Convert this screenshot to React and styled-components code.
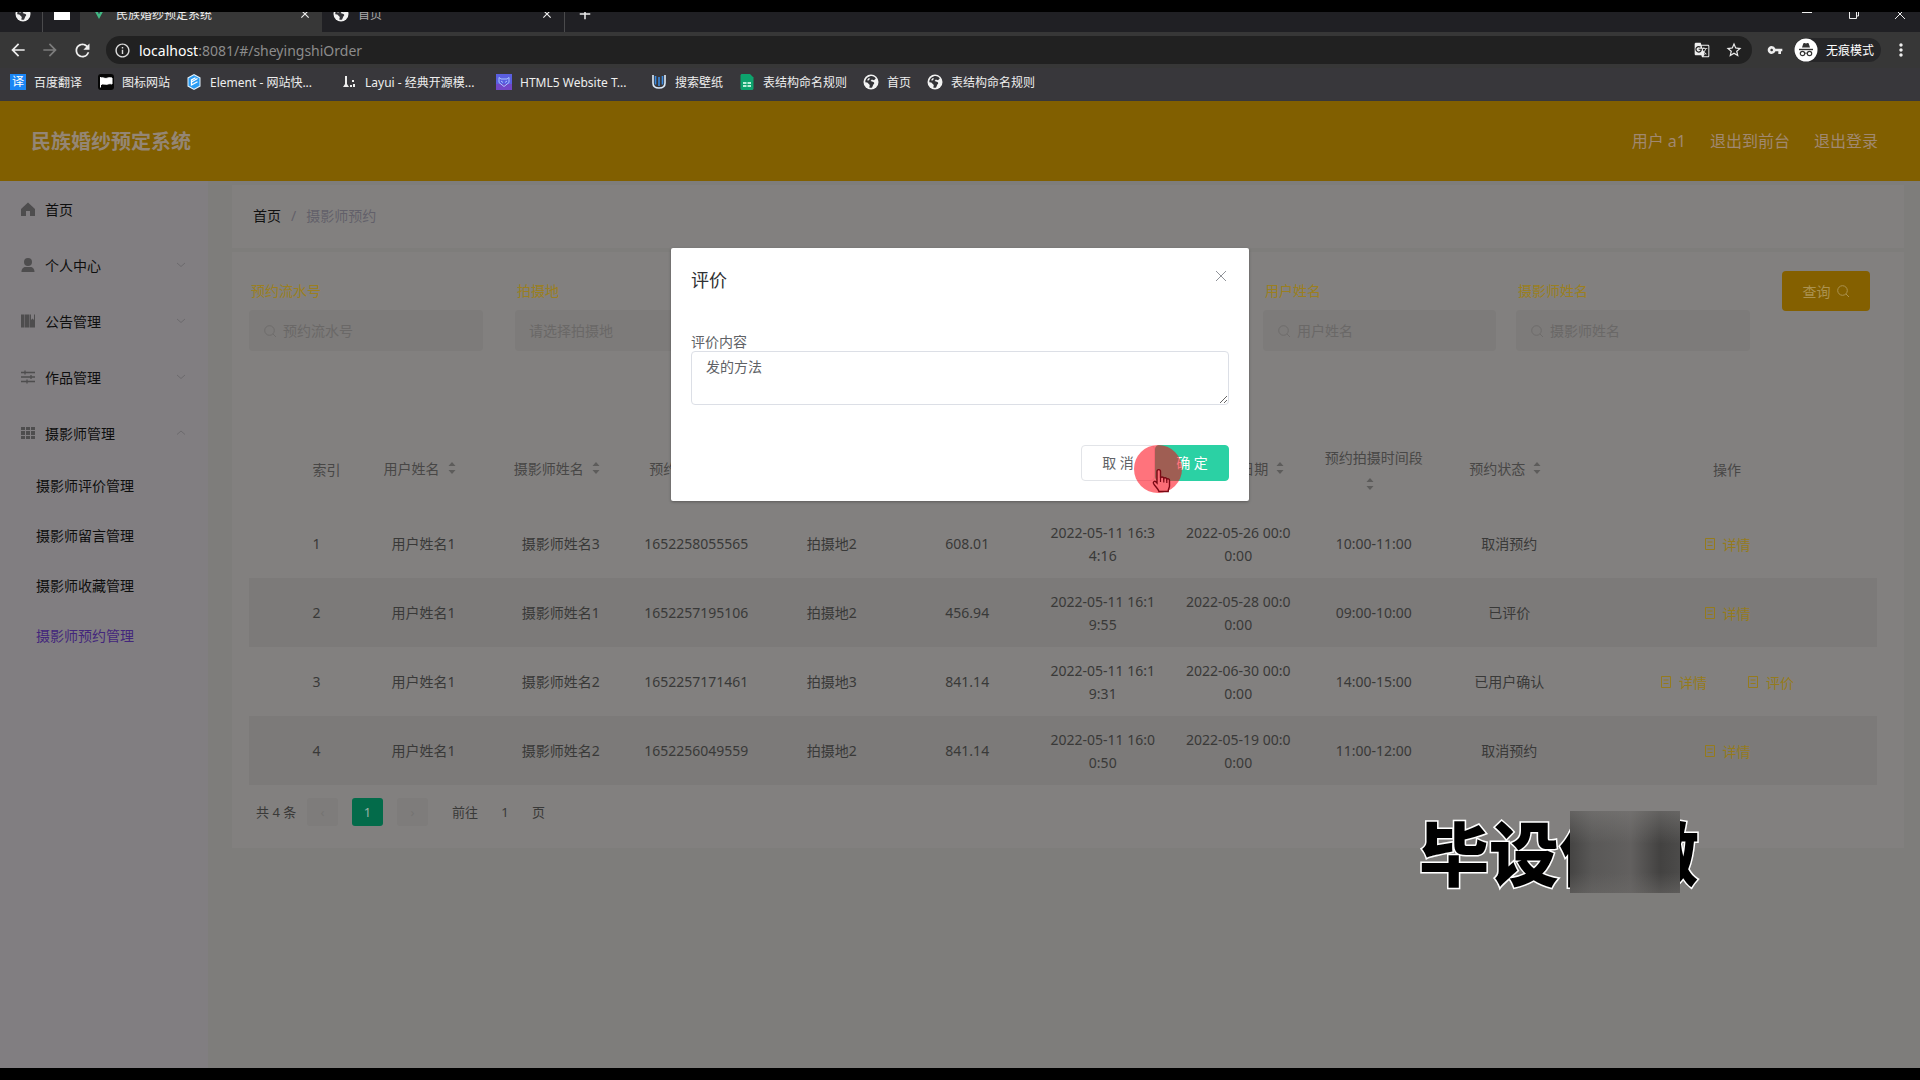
import React from 'react'
import styled, { createGlobalStyle } from 'styled-components'
import {
  MdArrowBack,
  MdArrowForward,
  MdRefresh,
  MdInfoOutline,
  MdGTranslate,
  MdStarBorder,
  MdVpnKey,
  MdMoreVert,
  MdClose,
  MdAdd
} from 'react-icons/md'

const GlobalStyle = createGlobalStyle`
  * {
    box-sizing: border-box;
  }

  body {
    margin: 0;
    background: #000;
    font-family: "Noto Sans", "Noto Sans CJK SC", sans-serif;
    font-size: 14px;
    line-height: 23px;
  }

  button, input, textarea {
    font-family: inherit;
  }

  ul, ol, h1, h2 {
    margin: 0;
    padding: 0;
    list-style: none;
  }

  a {
    color: inherit;
    text-decoration: none;
  }

  svg {
    display: block;
    flex: none;
  }
`

const Screen = styled.div`
  display: flex;
  flex-direction: column;
  min-height: 100vh;
  padding: 12px 0;
  overflow: hidden;
`

/* browser */

const TabStrip = styled.div`
  display: flex;
  align-items: flex-end;
  height: 20px;
  overflow: hidden;
  background: #202024;
  color: #fff;
`

const PinnedTab = styled.div`
  display: flex;
  align-items: center;
  justify-content: center;
  width: ${props => props.$width}px;
  height: 36px;
  padding-left: ${props => props.$divided ? '4px' : 0};
  border-right: ${props => props.$divided ? '1px solid #4a4a4c' : 'none'};
`

const Tab = styled.div`
  display: flex;
  align-items: center;
  gap: 9px;
  width: 242px;
  height: 36px;
  padding: 0 9px 0 11px;
  background: ${props => props.$active ? '#373737' : 'transparent'};
  color: ${props => props.$active ? '#eee' : '#aaa'};
  font-size: 12px;
`

const TabTitle = styled.span`
  flex: 1;
`

const PlainButton = styled.button`
  display: flex;
  align-items: center;
  justify-content: center;
  width: ${props => props.$width || 16}px;
  height: 36px;
  padding: 0;
  border: 0;
  background: none;
  color: ${props => props.$dim ? '#7c7c7c' : '#eee'};
`

const NewTab = styled(PlainButton)`
  margin-right: auto;
  border-left: 1px solid #4a4a4c;
`

const Toolbar = styled.div`
  display: flex;
  align-items: center;
  height: 36px;
  padding-left: 2px;
  background: #373737;
`

const AddressBar = styled.div`
  display: flex;
  flex: 1;
  align-items: center;
  height: 28px;
  margin: 0 4px 0 8px;
  padding: 0 2px 0 8px;
  border-radius: 14px;
  background: #212121;
  color: #ddd;
`

const Address = styled.span`
  flex: 1;
  margin-left: 8px;
  color: #8c8c8c;
`

const Host = styled.span`
  color: #fff;
`

const Incognito = styled.div`
  display: flex;
  align-items: center;
  gap: 8px;
  height: 24px;
  padding-right: 7px;
  border-radius: 12px;
  background: #262628;
  color: #fff;
  font-size: 12px;
`

const Bookmarks = styled.nav`
  display: flex;
  align-items: center;
  gap: 16px;
  height: 33px;
  padding: 0 10px 5px;
  background: #38373b;
  color: #eee;
  font-size: 12px;
`

const Bookmark = styled.a`
  display: flex;
  align-items: center;
  gap: 8px;
  white-space: nowrap;
`

const BookmarkText = styled.span`
  width: ${props => props.$clipped ? '115px' : 'auto'};
`

const TranslateMark = styled.span`
  width: 16px;
  height: 16px;
  background: #1b86f5;
  color: #fff;
  font-size: 12px;
  line-height: 16px;
  text-align: center;
`

/* application */

const Page = styled.div`
  position: relative;
  display: flex;
  flex: 1;
  flex-direction: column;
  background: #7e7d7b;
  color: #393938;
`

const Header = styled.header`
  display: flex;
  align-items: center;
  gap: 24px;
  height: 80px;
  padding: 0 42px 0 31px;
  background: #815f00;
  color: #a08870;
  font-size: 16px;
`

const Brand = styled.h1`
  flex: 1;
  color: #948675;
  font-size: 20px;
  font-weight: 700;
`

const Body = styled.div`
  display: flex;
  flex: 1;
`

const Sidebar = styled.nav`
  width: 208px;
  background: #817e81;
  color: #0e0e0e;
`

const MenuLink = styled.a`
  display: flex;
  align-items: center;
  height: 56px;
  padding: 0 22px 0 20px;
`

const MenuText = styled.span`
  flex: 1;
  margin-left: 9px;
`

const SubLink = styled.a`
  display: flex;
  align-items: center;
  height: 50px;
  padding: 0 0 2px 36px;
  color: ${props => props.$active ? '#43267c' : '#0e0e0e'};
`

const Main = styled.main`
  display: flex;
  flex: 1;
  flex-direction: column;
  padding: 4px 16px 0 24px;
`

const Breadcrumb = styled.div`
  display: flex;
  align-items: center;
  gap: 10px;
  height: 63px;
  padding: 0 0 2px 21px;
  background: #82807f;
  color: #62606a;
`

const Home = styled.a`
  color: #111;
`

const Panel = styled.section`
  margin-top: 4px;
  padding: 19px 27px 22px 17px;
  background: #82807f;
`

const SearchForm = styled.form`
  display: flex;
  align-items: flex-start;
  height: 159px;
`

const Field = styled.div`
  width: ${props => props.$width}px;
  margin-right: 20px;
  padding-top: 8px;
`

const FieldLabel = styled.label`
  display: block;
  height: 31px;
  padding-left: 2px;
  color: #9b7f20;
`

const InputBox = styled.div`
  display: flex;
  align-items: center;
  gap: 6px;
  width: 234px;
  max-width: 100%;
  height: 41px;
  padding: 0 14px;
  border-radius: 4px;
  background: #7d7b7a;
  color: #6e6c6b;
`

const TextInput = styled.input`
  flex: 1;
  min-width: 0;
  padding: 0;
  border: 0;
  background: none;
  font-size: 14px;

  &::placeholder {
    color: #6a6867;
  }
`

const SearchButton = styled.button`
  display: flex;
  align-items: center;
  justify-content: center;
  gap: 5px;
  width: 88px;
  height: 40px;
  margin: 0 7px 0 auto;
  padding: 0;
  border: 0;
  border-radius: 4px;
  background: #846000;
  color: #ab9250;
  font-size: 14px;
`

const Table = styled.table`
  width: 100%;
  table-layout: fixed;
  border-collapse: collapse;
  text-align: center;
`

const Col = styled.col`
  width: ${props => props.$width ? `${props.$width}px` : 'auto'};
`

const HeadCell = styled.th`
  height: 79px;
  padding: ${props => props.$shift ? '0 0 0 20px' : 0};
  color: #484746;
  font-weight: 400;
`

const SortCell = styled(HeadCell)`
  padding: 0 12px 3px;
`

const HeadLabel = styled.span`
  display: inline-flex;
  flex-wrap: wrap;
  align-items: center;
  justify-content: center;
  gap: 8px;
`

const SortArrows = styled.svg`
  margin-right: 8px;
`

const Row = styled.tr`
  height: 69px;
  background: ${props => props.$striped ? '#7c7a79' : 'transparent'};
`

const Cell = styled.td`
  padding: 0 12px;
  word-break: break-all;
`

const Actions = styled.div`
  display: flex;
  justify-content: center;
  gap: 40px;
`

const ActionButton = styled.button`
  display: flex;
  align-items: center;
  gap: 7px;
  padding: 0;
  border: 0;
  background: none;
  color: #957b1c;
  font-size: 14px;
`

const Pagination = styled.div`
  display: flex;
  align-items: center;
  height: 28px;
  margin-top: 13px;
  padding-left: 7px;
  font-size: 13px;
`

const PageButton = styled.button`
  width: 31px;
  height: 28px;
  margin-right: 14px;
  padding: 0;
  border: 0;
  border-radius: 3px;
  background: ${props => props.$active ? '#036b4a' : '#7e7c7b'};
  color: ${props => props.$active ? '#9bb3a8' : '#757372'};
  font-size: 13px;
`

const Total = styled.span`
  width: 51px;
`

const Jump = styled.label`
  display: flex;
  align-items: center;
  padding-left: 10px;
`

const JumpInput = styled.input`
  width: 54px;
  padding: 0;
  border: 0;
  background: none;
  color: inherit;
  font-size: 13px;
  text-align: center;
`

/* dialog */

const DialogLayer = styled.div`
  position: absolute;
  inset: 0;
  display: flex;
  align-items: flex-start;
  justify-content: center;
  padding-top: 147px;
`

const Dialog = styled.div`
  position: relative;
  width: 578px;
  padding: 20px;
  border-radius: 2px;
  background: #fff;
  box-shadow: 0 1px 3px rgba(0, 0, 0, 0.3);
  color: #606266;
`

const DialogHead = styled.div`
  display: flex;
  justify-content: space-between;
  height: 62px;
`

const DialogTitle = styled.h2`
  color: #303133;
  font-size: 18px;
  font-weight: 400;
  line-height: 24px;
`

const CloseButton = styled.button`
  display: flex;
  width: 16px;
  height: 16px;
  padding: 0;
  border: 0;
  background: none;
  color: #909399;
`

const DialogLabel = styled.label`
  display: block;
  height: 21px;
`

const Comment = styled.textarea`
  display: block;
  width: 100%;
  height: 54px;
  padding: 4px 14px;
  border: 1px solid #dcdfe6;
  border-radius: 4px;
  color: #606266;
  font-size: 14px;
  line-height: 21px;
  resize: vertical;
`

const DialogFoot = styled.div`
  display: flex;
  justify-content: flex-end;
  margin-top: 40px;
`

const DialogButton = styled.button`
  width: 74px;
  height: 36px;
  padding: 0 0 2px;
  border: 1px solid ${props => props.$primary ? '#2bd1a4' : '#e2e4e8'};
  border-radius: 4px;
  background: ${props => props.$primary ? '#2bd1a4' : '#fff'};
  color: ${props => props.$primary ? '#fff' : '#606266'};
  font-size: 14px;
`

const ClickMark = styled.div`
  position: absolute;
  right: 67px;
  bottom: 8px;
  width: 48px;
  height: 48px;
  border-radius: 50%;
  background: rgba(255, 0, 16, 0.55);
`

const Pointer = styled.svg`
  position: absolute;
  top: 23px;
  left: 17px;
`

const Watermark = styled.div`
  position: absolute;
  right: 221px;
  bottom: 171px;
  color: #000;
  font-size: 70px;
  font-weight: 900;
  line-height: 86px;
  -webkit-text-stroke: 3px #fff;
  paint-order: stroke fill;
`

const Mosaic = styled.div`
  position: absolute;
  top: 0;
  right: 19px;
  width: 110px;
  height: 82px;
  background:
    linear-gradient(180deg, rgba(130, 128, 126, 0.5), transparent 40%, transparent 75%, rgba(110, 108, 106, 0.5)),
    linear-gradient(90deg, #454443, #595857 20%, #62605f 55%, #434241 82%, #4c4b4a);
`

const GlobeIcon = () => (
  <svg width="16" height="16" viewBox="0 0 16 16">
    <circle cx="8" cy="8" r="7.5" fill="#f2f2f2" />
    <path d="M7 2.2c2.4-.7 4.8.4 5.8 2.3L11 6.3 8.8 5.6 7.6 7l2.8.9c1.2.5 1 2-.1 2.7l-1.2 2.9c-1 .5-2.2.2-2.8-.1l.5-2.5-2.5-2.3-2-.4C2 5.7 3.6 3.3 7 2.2zM5.4 4.3 4 6.2l1.6.3 1.6-2z" fill="#333337" />
  </svg>
)

const FlagIcon = () => (
  <svg width="16" height="16" viewBox="0 0 16 16">
    <rect width="16" height="16" rx="3" fill="#050505" />
    <path d="M2.5 3v10.5M3 4c2-1 3.5 1 5.5.3C10 3.8 12 3.5 14 4v6c-2-.5-3.5-.2-5 .2-2 .5-3.5-1-6 .3z" fill="#fff" stroke="#fff" />
  </svg>
)

const ElementIcon = () => (
  <svg width="16" height="16" viewBox="0 0 16 16">
    <path d="M8 0l6.5 3.5v9L8 16l-6.5-3.5v-9z" fill="#e6f4ff" />
    <path d="M8 1.2l5.5 3v7.6l-5.5 3-5.5-3V4.2z" fill="#2b9df4" />
    <path d="M11.5 4.5L5.5 8v3l6-3.3M5.5 8.5V6l4-2.3" fill="none" stroke="#fff" strokeWidth="1.3" />
  </svg>
)

const LayuiIcon = () => (
  <svg width="16" height="16" viewBox="0 0 16 16">
    <path d="M4 2h2v8l2 3H2l2-3zM11 6h2v2h-2zM9 11h2v2H9zM12 10h2v3h-2z" fill="#eee" />
  </svg>
)

const TemplateIcon = () => (
  <svg width="16" height="16" viewBox="0 0 16 16">
    <rect width="16" height="16" fill="#5a5fe0" />
    <rect y="10" width="16" height="6" fill="#7247c8" />
    <path d="M3 3.5l2 1.5h6l2-1.5v5L8 12.5 3 8.5zM5 7l2 1.5M11 7L9 8.5" fill="none" stroke="#a9c4ff" />
  </svg>
)

const WallpaperIcon = () => (
  <svg width="16" height="16" viewBox="0 0 16 16">
    <path d="M2 1v8c0 3 2 5 6 5s6-2 6-5V1" fill="none" stroke="#dcebfa" strokeWidth="1.6" />
    <path d="M4.5 2v8.5M8 3v9M11.5 2v8.5" stroke="#3b8be0" strokeWidth="1.6" />
  </svg>
)

const SheetIcon = () => (
  <svg width="16" height="16" viewBox="0 0 16 16">
    <path d="M1.5 1.5C1.5.7 2.2 0 3 0h8l3.5 3.5v11c0 .8-.7 1.5-1.5 1.5H3c-.8 0-1.5-.7-1.5-1.5z" fill="#0da36d" />
    <path d="M4 8h3.5v2H4zM8.5 8H12v2H8.5zM4 11h3.5v2H4zM8.5 11H12v2H8.5z" fill="#b9f0d8" />
  </svg>
)

const VueIcon = () => (
  <svg width="16" height="12" viewBox="-2 0 16 12">
    <path d="M0 0h3l3 6 3-6h3L6 11z" fill="#41b883" />
    <path d="M3 0h2l1 2 1-2h2L6 6z" fill="#35495e" />
  </svg>
)

const IncognitoIcon = () => (
  <svg width="24" height="24" viewBox="0 0 24 24">
    <circle cx="12" cy="12" r="11.5" fill="#fff" />
    <path d="M8 9.5L9.3 5.5c.2-.6.7-.7 1.2-.5l1.5.5 1.5-.5c.5-.2 1-.1 1.2.5L16 9.5z" fill="#333" />
    <path d="M5 11.5h14" stroke="#333" strokeWidth="1.4" />
    <path d="M10.8 15.5c.7-.5 1.7-.5 2.4 0" fill="none" stroke="#333" />
    <circle cx="8.5" cy="15.5" r="2.2" fill="none" stroke="#333" strokeWidth="1.2" />
    <circle cx="15.5" cy="15.5" r="2.2" fill="none" stroke="#333" strokeWidth="1.2" />
  </svg>
)

const menuShapes = {
  home: <path d="M8 1.5L15 8v7h-5v-5H6v5H1V8z" fill="currentColor" />,
  user: <path d="M8 1a4 4 0 1 1 0 8 4 4 0 0 1 0-8zM1.5 15c0-3.5 2-5 4-5h5c2 0 4 1.5 4 5z" fill="currentColor" />,
  book: <path d="M1 1.5h3v13H1zM4.5 1.5H9v13H4.500zM9.5 10V1.5h1.500V7l1.500-1.500L14 7V1.500h1v13H9.500z" fill="currentColor" />,
  sliders: <path d="M1 3.5h14M1 8h14M1 12.5h14M5 1.5v4M11 6v4M7 10.5v4" stroke="currentColor" strokeWidth="1.3" />,
  grid: <path d="M1 2h4v3H1zM6 2h4v3H6zM11 2h4v3h-4zM1 6h4v4H1zM6 6h4v4H6zM11 6h4v4h-4zM1 11h4v3H1zM6 11h4v3H6zM11 11h4v3h-4z" fill="currentColor" />
}

const MenuIcon = ({ name }) => (
  <svg width="16" height="16" viewBox="0 0 16 16" color="#4e4d4e">{menuShapes[name]}</svg>
)

const Chevron = ({ up }) => (
  <svg width="10" height="10" viewBox="0 0 10 10" fill="none" stroke="#6c6a6d">
    <path d={up ? 'M1 6.5l4-3.5 4 3.5' : 'M1 3l4 3.5L9 3'} />
  </svg>
)

const SearchIcon = () => (
  <svg width="14" height="14" viewBox="0 0 14 14" fill="none" stroke="currentColor">
    <circle cx="6.5" cy="6.5" r="4.8" />
    <path d="M10 10l3 3" />
  </svg>
)

const SortIcon = () => (
  <SortArrows width="8" height="14" viewBox="0 0 8 14" fill="#5d5c5b">
    <path d="M4 1l3.5 4h-7zM4 13L.5 9h7z" />
  </SortArrows>
)

const DocIcon = () => (
  <svg width="12" height="14" viewBox="0 0 12 14" fill="none" stroke="currentColor">
    <path d="M1.5 1.5h9v11h-9zM3.5 5h5M3.5 8.5h5" />
  </svg>
)

const bookmarks = [
  { text: '百度翻译', icon: <TranslateMark>译</TranslateMark> },
  { text: '图标网站', icon: <FlagIcon /> },
  { text: 'Element - 网站快...', icon: <ElementIcon />, clipped: true },
  { text: 'Layui - 经典开源模...', icon: <LayuiIcon />, clipped: true },
  { text: 'HTML5 Website T...', icon: <TemplateIcon />, clipped: true },
  { text: '搜索壁纸', icon: <WallpaperIcon /> },
  { text: '表结构命名规则', icon: <SheetIcon /> },
  { text: '首页', icon: <GlobeIcon /> },
  { text: '表结构命名规则', icon: <GlobeIcon /> }
]

const menu = [
  { text: '首页', icon: 'home' },
  { text: '个人中心', icon: 'user', nested: true },
  { text: '公告管理', icon: 'book', nested: true },
  { text: '作品管理', icon: 'sliders', nested: true },
  { text: '摄影师管理', icon: 'grid', nested: true, open: true }
]

const submenu = ['摄影师评价管理', '摄影师留言管理', '摄影师收藏管理', '摄影师预约管理']

const fields = [
  { id: 'no', label: '预约流水号', width: 246, icon: true },
  { id: 'place', label: '拍摄地', hint: '请选择拍摄地', width: 234 },
  { id: 'date', label: '预约日期', width: 227 },
  { id: 'account', label: '用户账号', width: 227, icon: true },
  { id: 'user', label: '用户姓名', width: 233, icon: true },
  { id: 'photographer', label: '摄影师姓名', width: 234, icon: true }
]

const columns = ['用户姓名', '摄影师姓名', '预约流水号', '拍摄地', '价格', '预约时间', '预约拍摄日期', '预约拍摄时间段', '预约状态']

const orders = [
  ['用户姓名1', '摄影师姓名3', '1652258055565', '拍摄地2', '608.01', '2022-05-11 16:34:16', '2022-05-26 00:00:00', '10:00-11:00', '取消预约'],
  ['用户姓名1', '摄影师姓名1', '1652257195106', '拍摄地2', '456.94', '2022-05-11 16:19:55', '2022-05-28 00:00:00', '09:00-10:00', '已评价'],
  ['用户姓名1', '摄影师姓名2', '1652257171461', '拍摄地3', '841.14', '2022-05-11 16:19:31', '2022-06-30 00:00:00', '14:00-15:00', '已用户确认'],
  ['用户姓名1', '摄影师姓名2', '1652256049559', '拍摄地2', '841.14', '2022-05-11 16:00:50', '2022-05-19 00:00:00', '11:00-12:00', '取消预约']
]

const Browser = () => (
  <>
    <TabStrip>
      <PinnedTab $width={43} $divided><GlobeIcon /></PinnedTab>
      <PinnedTab $width={37}>
        <svg width="16" height="12" viewBox="0 0 16 12"><rect width="16" height="12" fill="#fff" /></svg>
      </PinnedTab>
      <Tab $active>
        <VueIcon />
        <TabTitle>民族婚纱预定系统</TabTitle>
        <PlainButton aria-label="关闭标签页"><MdClose size={14} /></PlainButton>
      </Tab>
      <Tab>
        <GlobeIcon />
        <TabTitle>首页</TabTitle>
        <PlainButton aria-label="关闭标签页"><MdClose size={14} /></PlainButton>
      </Tab>
      <NewTab $width={40} aria-label="新标签页"><MdAdd size={18} /></NewTab>
      <PlainButton $width={42} aria-label="最小化">
        <svg width="12" height="12" viewBox="0 0 12 12"><path d="M1 4.5h10" stroke="#eee" /></svg>
      </PlainButton>
      <PlainButton $width={52} aria-label="还原">
        <svg width="12" height="12" viewBox="0 0 12 12" fill="none" stroke="#eee"><path d="M1.5 3.5h7v7h-7zM4 3V1h6.5v7H9" /></svg>
      </PlainButton>
      <PlainButton $width={40} aria-label="关闭">
        <svg width="12" height="12" viewBox="0 0 12 12" stroke="#eee"><path d="M1 1l10 10M11 1L1 11" /></svg>
      </PlainButton>
    </TabStrip>
    <Toolbar>
      <PlainButton $width={32} aria-label="后退"><MdArrowBack size={20} /></PlainButton>
      <PlainButton $width={32} $dim aria-label="前进"><MdArrowForward size={20} /></PlainButton>
      <PlainButton $width={32} aria-label="刷新"><MdRefresh size={21} /></PlainButton>
      <AddressBar>
        <MdInfoOutline size={17} />
        <Address><Host>localhost</Host>:8081/#/sheyingshiOrder</Address>
        <PlainButton $width={32} aria-label="翻译"><MdGTranslate size={16} /></PlainButton>
        <PlainButton $width={32} aria-label="收藏"><MdStarBorder size={18} /></PlainButton>
      </AddressBar>
      <PlainButton $width={38} aria-label="密码"><MdVpnKey size={16} /></PlainButton>
      <Incognito><IncognitoIcon />无痕模式</Incognito>
      <PlainButton $width={39} aria-label="菜单"><MdMoreVert size={20} /></PlainButton>
    </Toolbar>
    <Bookmarks>
      {bookmarks.map((item, index) =>
        <Bookmark href="#" key={index}>
          {item.icon}
          <BookmarkText $clipped={item.clipped}>{item.text}</BookmarkText>
        </Bookmark>
      )}
    </Bookmarks>
  </>
)

const SideMenu = () => (
  <Sidebar>
    <ul>
      {menu.map(item =>
        <li key={item.text}>
          <MenuLink href="#">
            <MenuIcon name={item.icon} />
            <MenuText>{item.text}</MenuText>
            {item.nested && <Chevron up={item.open} />}
          </MenuLink>
          {item.open &&
            <ul>
              {submenu.map(text =>
                <li key={text}>
                  <SubLink href="#" $active={text === '摄影师预约管理'}>{text}</SubLink>
                </li>
              )}
            </ul>
          }
        </li>
      )}
    </ul>
  </Sidebar>
)

const Search = () => (
  <SearchForm onSubmit={event => event.preventDefault()}>
    {fields.map(field =>
      <Field key={field.id} $width={field.width}>
        <FieldLabel htmlFor={field.id}>{field.label}</FieldLabel>
        <InputBox>
          {field.icon && <SearchIcon />}
          <TextInput id={field.id} placeholder={field.hint || field.label} />
        </InputBox>
      </Field>
    )}
    <SearchButton type="submit">查询 <SearchIcon /></SearchButton>
  </SearchForm>
)

const OrderTable = () => (
  <Table>
    <colgroup>
      <Col $width={30} />
      <Col $width={75} />
      <Col $width={139} />
      {columns.slice(1).map(name => <Col key={name} />)}
      <Col $width={300} />
    </colgroup>
    <thead>
      <tr>
        <HeadCell />
        <HeadCell $shift>索引</HeadCell>
        {columns.map(name =>
          <SortCell key={name}>
            <HeadLabel>{name}<SortIcon /></HeadLabel>
          </SortCell>
        )}
        <HeadCell>操作</HeadCell>
      </tr>
    </thead>
    <tbody>
      {orders.map((order, index) =>
        <Row key={order[2]} $striped={index % 2 === 1}>
          <Cell />
          <Cell>{index + 1}</Cell>
          {order.map((value, i) => <Cell key={i}>{value}</Cell>)}
          <Cell>
            <Actions>
              <ActionButton><DocIcon />详情</ActionButton>
              {order[8] === '已用户确认' && <ActionButton><DocIcon />评价</ActionButton>}
            </Actions>
          </Cell>
        </Row>
      )}
    </tbody>
  </Table>
)

const CommentDialog = () => (
  <DialogLayer>
    <Dialog role="dialog" aria-labelledby="dialog-title">
      <DialogHead>
        <DialogTitle id="dialog-title">评价</DialogTitle>
        <CloseButton aria-label="关闭">
          <svg width="16" height="16" viewBox="0 0 16 16" stroke="currentColor"><path d="M3 3l10 10M13 3L3 13" /></svg>
        </CloseButton>
      </DialogHead>
      <DialogLabel htmlFor="comment">评价内容</DialogLabel>
      <Comment id="comment" defaultValue="发的方法" />
      <DialogFoot>
        <DialogButton>取 消</DialogButton>
        <DialogButton $primary>确 定</DialogButton>
      </DialogFoot>
      <ClickMark>
        <Pointer width="22" height="26" viewBox="0 0 22 26">
          <path
            d="M6 15V3.5C6 1 9.5 1 9.5 3.5V10c.3-1.5 3-1.5 3.3.5.5-1.2 2.8-1 3 .8.7-1 2.7-.6 2.7 1.2V18c0 1.5-1.3 3-1.3 5.5H8c-.5-2.5-4-5-5.5-8-.8-2 1.3-2.8 2.3-1.7z"
            fill="#fb6d76"
            stroke="#7a0814"
            strokeWidth="1.4"
          />
          <path d="M9.5 10v4M12.8 11v3.5M15.8 12v3" stroke="#7a0814" strokeWidth="1.2" />
        </Pointer>
      </ClickMark>
    </Dialog>
  </DialogLayer>
)

const App = () => {
  return (
    <Screen>
      <GlobalStyle />
      <Browser />
      <Page>
        <Header>
          <Brand>民族婚纱预定系统</Brand>
          <span>用户 a1</span>
          <a href="#">退出到前台</a>
          <a href="#">退出登录</a>
        </Header>
        <Body>
          <SideMenu />
          <Main>
            <Breadcrumb>
              <Home href="#">首页</Home>
              <span>/</span>
              <span>摄影师预约</span>
            </Breadcrumb>
            <Panel>
              <Search />
              <OrderTable />
              <Pagination>
                <Total>共 4 条</Total>
                <PageButton aria-label="上一页">‹</PageButton>
                <PageButton $active>1</PageButton>
                <PageButton aria-label="下一页">›</PageButton>
                <Jump>前往<JumpInput defaultValue="1" />页</Jump>
              </Pagination>
            </Panel>
          </Main>
        </Body>
        <CommentDialog />
        <Watermark>毕设优做<Mosaic /></Watermark>
      </Page>
    </Screen>
  )
}

export default App
